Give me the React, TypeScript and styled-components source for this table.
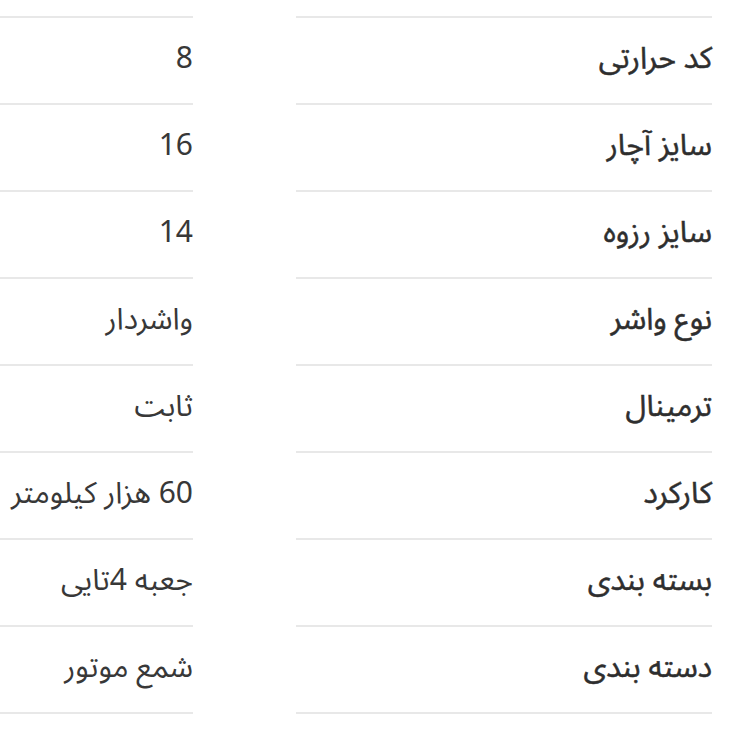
import React from "react";
import styled, { createGlobalStyle } from "styled-components";

const Global = createGlobalStyle`
  html, body { margin: 0; padding: 0; background: #ffffff; }
  body { overflow: hidden; width: 750px; height: 750px; }
`;

const Page = styled.div`
  direction: rtl;
  width: 750px;
  height: 750px;
  overflow: hidden;
  padding-top: 16px;
  padding-right: 38px;
  box-sizing: border-box;
  font-family: "Noto Sans Arabic", "Vazirmatn", "Noto Sans", "DejaVu Sans", sans-serif;
`;

const Table = styled.div`
  display: grid;
  grid-template-columns: 416px 260px;
  column-gap: 103px;
`;

const Cell = styled.div<{ $last?: boolean }>`
  height: ${(p) => (p.$last ? "89px" : "87px")};
  display: flex;
  align-items: center;
  padding-bottom: 4px;
  box-sizing: border-box;
  border-top: 2px solid #e8e8e8;
  border-bottom: ${(p) => (p.$last ? "2px solid #e8e8e8" : "none")};
  white-space: nowrap;
`;

const Label = styled(Cell)`
  font-size: 30px;
  font-weight: 400;
  color: #2e2e2e;
  -webkit-text-stroke: 0.5px #2e2e2e;
`;

const Value = styled(Cell)`
  font-size: 30px;
  font-weight: 400;
  color: #383838;
  justify-content: flex-start;
`;

const rows: [string, string][] = [
  ["کد حرارتی", "8"],
  ["سایز آچار", "16"],
  ["سایز رزوه", "14"],
  ["نوع واشر", "واشردار"],
  ["ترمینال", "ثابت"],
  ["کارکرد", "60 هزار کیلومتر"],
  ["بسته بندی", "جعبه 4تایی"],
  ["دسته بندی", "شمع موتور"],
];

export default function App() {
  return (
    <>
      <Global />
      <Page>
        <Table>
          {rows.map(([l, v], i) => (
            <React.Fragment key={l}>
              <Label $last={i === rows.length - 1}>{l}</Label>
              <Value $last={i === rows.length - 1}>{v}</Value>
            </React.Fragment>
          ))}
        </Table>
      </Page>
    </>
  );
}
